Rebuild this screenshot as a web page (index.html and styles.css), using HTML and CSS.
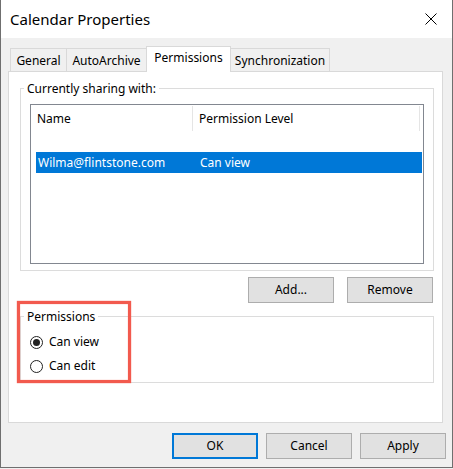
FILE: index.html
```html
<!DOCTYPE html>
<html>
<head>
<meta charset="utf-8">
<link rel="stylesheet" href="styles.css">
</head>
<body>
<div class="window">
  <div class="titlebar">
    <span class="title">Calendar Properties</span>
    <svg class="close" width="12" height="12" viewBox="0 0 12 12"><path d="M0.5 0.5 L11.5 11.5 M11.5 0.5 L0.5 11.5" stroke="#000" stroke-width="1" fill="none"/></svg>
  </div>
  <div class="body">
    <div class="tabs">
      <div class="tab t-general">General</div>
      <div class="tab t-auto">AutoArchive</div>
      <div class="tab t-perm active">Permissions</div>
      <div class="tab t-sync">Synchronization</div>
    </div>
    <div class="panel">
      <fieldset class="group share">
        <legend>Currently sharing with:</legend>
        <div class="list">
          <div class="list-head">
            <div class="hcol hname">Name</div>
            <div class="hcol hlevel">Permission Level</div>
          </div>
          <div class="row selected">
            <span class="c1">Wilma@flintstone.com</span>
            <span class="c2">Can view</span>
          </div>
        </div>
      </fieldset>
      <div class="list-buttons">
        <button class="btn">Add...</button>
        <button class="btn">Remove</button>
      </div>
      <fieldset class="group perms">
        <legend>Permissions</legend>
        <label class="radio"><span class="dot checked"></span>Can view</label>
        <label class="radio"><span class="dot"></span>Can edit</label>
      </fieldset>
    </div>
    <div class="dialog-buttons">
      <button class="btn default">OK</button>
      <button class="btn">Cancel</button>
      <button class="btn">Apply</button>
    </div>
  </div>
  <div class="highlight"></div>
</div>
</body>
</html>
```
FILE: styles.css
```css
* { box-sizing: border-box; }
html, body { margin: 0; padding: 0; }
body {
  width: 453px;
  height: 469px;
  background: #f0f0f0;
  font-family: "Noto Sans", "Open Sans", sans-serif;
  font-size: 12px;
  color: #000;
  overflow: hidden;
}
.window {
  position: relative;
  width: 453px;
  height: 468px;
  background: #f0f0f0;
  border-left: 1px solid #6f6f6f;
  border-right: 1px solid #6f6f6f;
  border-bottom: 1px solid #6f6f6f;
}
.titlebar {
  height: 38px;
  background: #fff;
  display: flex;
  align-items: center;
  justify-content: space-between;
  padding: 0 15px 0 9px;
}
.title {
  font-size: 15px;
  line-height: 20px;
  margin-top: -1px;
}
.close { display: block; }
.body {
  padding: 8px 9px 0 7px;
}
.tabs {
  display: flex;
  align-items: flex-end;
  height: 25px;
  padding-left: 2px;
}
.tab {
  height: 23px;
  border: 1px solid #d9d9d9;
  border-bottom: none;
  background: #f0f0f0;
  display: flex;
  align-items: center;
  justify-content: center;
  margin-left: -1px;
  line-height: 16px;
  padding-top: 1px;
}
.tab:first-child { margin-left: 0; }
.t-general { width: 57px; }
.t-auto { width: 81px; }
.t-perm { width: 85px; }
.t-sync { width: 100px; }
.tab.active {
  position: relative;
  z-index: 1;
  height: 26px;
  margin-bottom: -1px;
  background: #fff;
  padding-top: 0;
  padding-bottom: 4px;
}
.panel {
  height: 352px;
  background: #fff;
  border: 1px solid #d9d9d9;
  padding: 8px 8px 0 11px;
}
.group {
  margin: 0;
  width: 414px;
  border: 1px solid #dcdcdc;
  padding: 0 0 0 9px;
}
.group legend {
  padding: 0 3px;
  margin-left: -6px;
  line-height: 17px;
  height: 16px;
}
.share {
  padding-top: 8px;
  padding-bottom: 6px;
}
.list {
  width: 394px;
  height: 160px;
  border: 1px solid #828790;
  background: #fff;
}
.list-head {
  display: flex;
  height: 25px;
  margin-top: 1px;
}
.hcol {
  display: flex;
  align-items: center;
  border-right: 1px solid #e5e5e5;
  line-height: 16px;
}
.hname { width: 162px; padding-left: 6px; }
.hlevel { width: 227px; padding-left: 6px; }
.row {
  display: flex;
  align-items: center;
  height: 21px;
  margin: 21px 1px 0 5px;
  line-height: 16px;
}
.row.selected { background: #0078d7; color: #fff; }
.c1 { width: 164px; padding-left: 2px; }
.list-buttons {
  display: flex;
  justify-content: flex-end;
  gap: 13px;
  margin: 6px 1px 0 0;
}
.btn {
  width: 86px;
  height: 26px;
  margin: 0;
  padding: 0;
  border: 1px solid #adadad;
  background: #e1e1e1;
  font-family: inherit;
  font-size: 12px;
  color: #000;
  line-height: 16px;
}
.btn.default { border: 2px solid #0078d7; }
.perms {
  margin-top: 5px;
  height: 75px;
  padding-top: 6px;
  padding-left: 9px;
}
.radio {
  display: flex;
  align-items: center;
  height: 24px;
  line-height: 16px;
}
.dot {
  width: 13px;
  height: 13px;
  border: 1px solid #222;
  border-radius: 50%;
  margin-right: 6px;
  display: flex;
  align-items: center;
  justify-content: center;
  background: #fff;
}
.dot.checked::after {
  content: "";
  width: 7px;
  height: 7px;
  border-radius: 50%;
  background: #222;
}
.dialog-buttons {
  display: flex;
  justify-content: flex-end;
  gap: 8px;
  margin: 10px -3px 0 0;
}
.highlight {
  position: absolute;
  left: 16px;
  top: 301px;
  width: 114px;
  height: 82px;
  border: 3px solid #f25a4e;
  box-shadow: 0 0 1px #f25a4e, inset 0 0 1px #f25a4e;
  pointer-events: none;
}
```
